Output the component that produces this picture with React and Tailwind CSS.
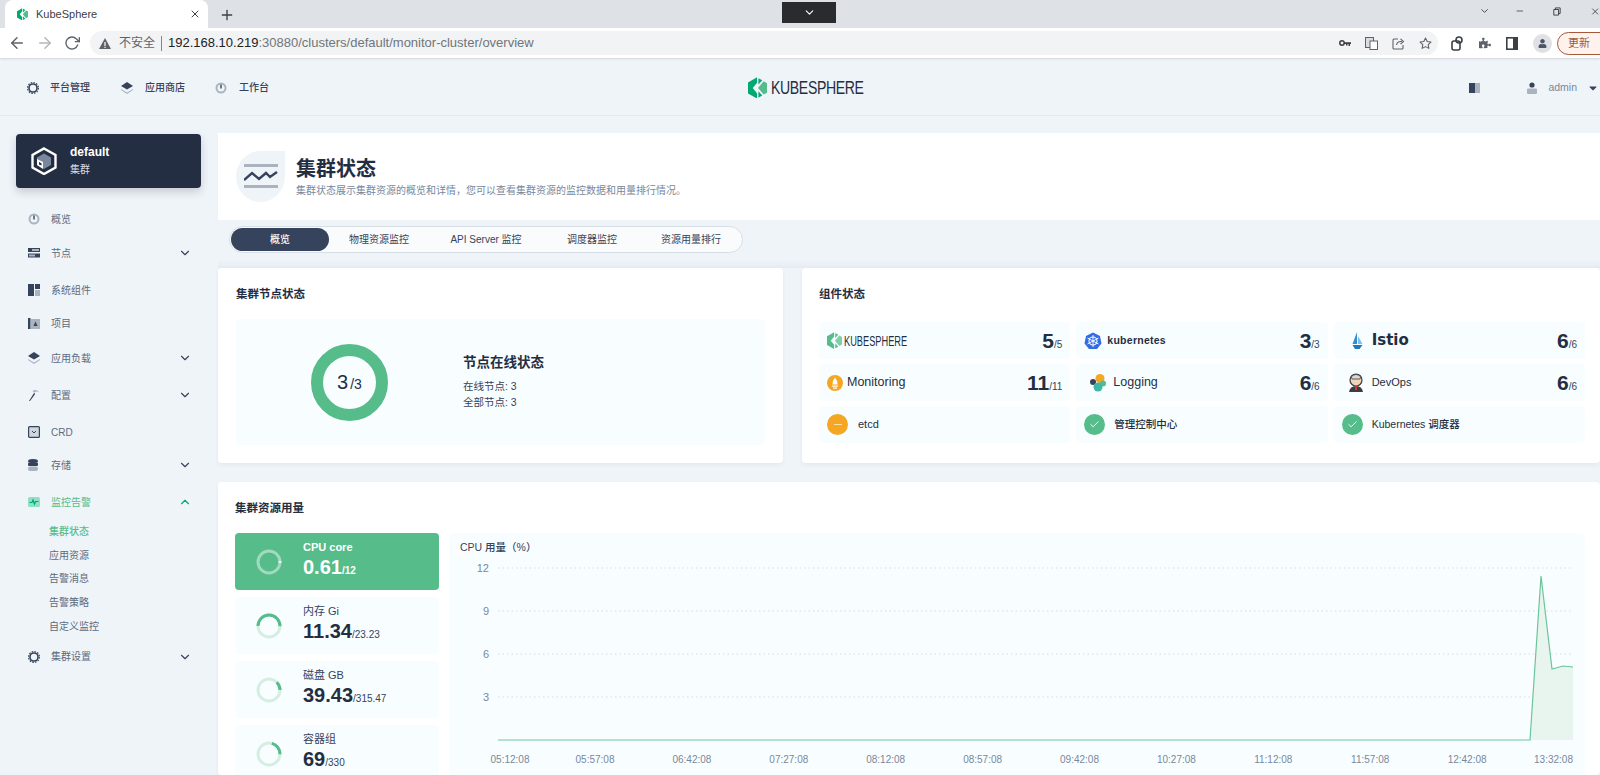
import React from 'react';
import { FiChevronDown, FiChevronUp, FiArrowLeft, FiArrowRight, FiRotateCw, FiX, FiPlus, FiStar, FiCheck, FiMinus } from 'react-icons/fi';
import { FaPuzzlePiece, FaUser, FaCaretDown } from 'react-icons/fa';

const GREEN = '#55bc8a';

const KsLogo = ({ size = 20, dim }) => (
  <svg width={size} height={size * 1.15} viewBox="0 0 20 23" className="shrink-0">
    <path d="M0 5.75 L9.5 0.3 L9.5 6 L5 11.5 L9.5 17 L9.5 22.7 L0 17.25 Z" fill={dim ? '#55bc8a' : '#00a971'} />
    <path d="M11 1.2 L15 3.5 L11 8 Z" fill={dim ? '#55bc8a' : '#00a971'} />
    <path d="M11 15 L15 19.5 L11 21.8 Z" fill={dim ? '#55bc8a' : '#00a971'} />
    <path d="M16.5 4.5 L20 6.5 L20 16.5 L16.5 18.5 L10.5 11.5 Z" fill={dim ? '#7fd0a8' : '#55bc8a'} />
  </svg>
);

const NavIcon = ({ type, active }) => {
  const dark = active ? '#00a971' : '#36435c';
  const light = active ? '#90e0c5' : '#abb4be';
  if (type === 'gauge') return (
    <svg width="12" height="12" viewBox="0 0 12 12">
      <circle cx="6" cy="6" r="5.5" fill={light} />
      <circle cx="6" cy="6" r="3.5" fill="#eff4f9" />
      <rect x="5.3" y="2.5" width="1.4" height="4" fill={dark} />
    </svg>
  );
  if (type === 'nodes') return (
    <svg width="12" height="10" viewBox="0 0 12 10">
      <rect width="12" height="4" fill={dark} />
      <rect y="5.5" width="12" height="4" fill={dark} />
      <rect x="4" y="1" width="7" height="2" fill={light} />
      <rect x="1" y="6.5" width="6" height="2" fill={light} />
    </svg>
  );
  if (type === 'comp') return (
    <svg width="12" height="12" viewBox="0 0 12 12">
      <rect width="6" height="12" fill={dark} />
      <rect x="7" width="5" height="5" fill={dark} />
      <rect x="7" y="6" width="5" height="6" fill={light} />
    </svg>
  );
  if (type === 'project') return (
    <svg width="12" height="11" viewBox="0 0 12 11">
      <rect width="2.5" height="11" fill={dark} />
      <rect x="3" y="1" width="9" height="10" fill={light} />
      <path d="M7.5 3.5 L9.5 8 L5.5 8 Z" fill={dark} />
    </svg>
  );
  if (type === 'layers') return (
    <svg width="12" height="12" viewBox="0 0 12 12">
      <path d="M6 0 L12 4 L6 7.5 L0 4 Z" fill={dark} />
      <path d="M0 7 L6 10.5 L12 7 L12 8 L6 12 L0 8 Z" fill={light} />
    </svg>
  );
  if (type === 'hammer') return (
    <svg width="12" height="12" viewBox="0 0 12 12">
      <path d="M1 12 L6 4 L7.2 5 L2 12 Z" fill={dark} />
      <path d="M4.5 2 Q8 -0.5 11.5 3.5 Q8 1.5 6.5 4 Z" fill={light} />
    </svg>
  );
  if (type === 'crd') return (
    <svg width="12" height="12" viewBox="0 0 12 12">
      <rect x="0.6" y="0.6" width="10.8" height="10.8" rx="1" fill="#cfd6de" stroke={dark} strokeWidth="1.2" />
      <path d="M4 5 L6 7 L8 5" fill="none" stroke={dark} />
    </svg>
  );
  if (type === 'db') return (
    <svg width="10" height="12" viewBox="0 0 10 12">
      <ellipse cx="5" cy="2" rx="5" ry="2" fill={dark} />
      <rect y="3.5" width="10" height="3.5" rx="1" fill={dark} />
      <rect y="7.5" width="10" height="4.5" rx="2" fill={light} />
    </svg>
  );
  if (type === 'monitor') return (
    <svg width="12" height="10" viewBox="0 0 12 10">
      <rect width="12" height="10" rx="1.5" fill="#90e0c5" />
      <path d="M1.5 5.5 L4 5.5 L5 3 L6.5 7 L7.5 4.5 L10.5 4.5" fill="none" stroke="#00a971" strokeWidth="1.2" />
    </svg>
  );
  if (type === 'gear') return (
    <svg width="12" height="12" viewBox="0 0 12 12">
      <circle cx="6" cy="6" r="4" fill="none" stroke={dark} strokeWidth="1.6" />
      <circle cx="6" cy="6" r="5.4" fill="none" stroke={dark} strokeWidth="1.2" strokeDasharray="1.6 1.2" />
    </svg>
  );
  return null;
};

const sideItems = [
  { label: '概览', icon: 'gauge', cls: 'mt-[21px]' },
  { label: '节点', icon: 'nodes', more: true, cls: 'mt-[14px]' },
  { label: '系统组件', icon: 'comp', cls: 'mt-[17px]' },
  { label: '项目', icon: 'project', cls: 'mt-[13px]' },
  { label: '应用负载', icon: 'layers', more: true, cls: 'mt-[15px]' },
  { label: '配置', icon: 'hammer', more: true, cls: 'mt-[17px]' },
  { label: 'CRD', icon: 'crd', cls: 'mt-[17px]' },
  { label: '存储', icon: 'db', more: true, cls: 'mt-[13px]' },
  { label: '监控告警', icon: 'monitor', open: true, cls: 'mt-[17px]' },
];

const subItems = ['集群状态', '应用资源', '告警消息', '告警策略', '自定义监控'];

const SideRow = ({ item }) => (
  <div className={`flex h-5 items-center pl-[28px] pr-[26px] text-[10px] ${item.cls} ${item.open ? 'text-[#55bc8a]' : 'text-[#5c6b80]'}`}>
    <span className="flex w-[23px] items-center"><NavIcon type={item.icon} active={item.open} /></span>
    <span className="flex-1">{item.label}</span>
    {item.more && <FiChevronDown size={14} className="text-[#36435c]" />}
    {item.open && <FiChevronUp size={14} className="text-[#00a971]" />}
  </div>
);

const Sidebar = () => (
  <aside className="w-[218px] shrink-0 pt-[18px]">
    <div className="ml-4 mr-[17px] flex h-[54px] items-center rounded-sm bg-[#242e42] pl-[15px] shadow-[0_4px_8px_0_rgba(36,46,66,0.2)]">
      <svg width="26" height="28" viewBox="0 0 26 28">
        <path d="M13 1.5 L24.5 8 L24.5 20.5 L13 27 L1.5 20.5 L1.5 8 Z" fill="none" stroke="#fff" strokeWidth="2.4" />
        <path d="M13 6.5 L20 10.5 L20 18 L13 22 L6 18 L6 10.5 Z" fill="#79879c" />
        <path d="M6 12 L12 15 L12 22 L6 18 Z" fill="#fff" />
        <path d="M8 15 L10.5 16.2 L10.5 18.6 L8 17.4 Z" fill="#242e42" />
      </svg>
      <div className="ml-[13px] -mt-[2px] text-white">
        <div className="text-xs font-bold leading-[18px]">default</div>
        <div className="text-[10px] leading-[17px] text-[#d8dee5]">集群</div>
      </div>
    </div>
    {sideItems.map((item) => <SideRow key={item.label} item={item} />)}
    <div className="mt-[8px] pl-[49px]">
      {subItems.map((s, i) => (
        <div key={s} className={`flex h-[23.6px] items-center text-[10px] ${i === 0 ? 'font-medium text-[#55bc8a]' : 'text-[#5c6b80]'}`}>{s}</div>
      ))}
    </div>
    <SideRow item={{ label: '集群设置', icon: 'gear', more: true, cls: 'mt-[9px]' }} />
  </aside>
);

const BrowserChrome = () => (
  <div className="shrink-0">
    <div className="relative flex h-[28px] items-end bg-[#dee1e6]">
      <div className="ml-[5px] flex h-[28px] w-[203px] items-center rounded-t-lg bg-white pl-[12px] pr-[7px] text-xs text-[#3c4043]">
        <KsLogo size={11} />
        <span className="ml-[8px] flex-1 text-[11px]">KubeSphere</span>
        <FiX size={12} className="text-[#3c4043]" />
      </div>
      <FiPlus size={16} className="mb-[5px] ml-[11px] text-[#3c4043]" />
      <div className="absolute left-[782px] top-[2px] flex h-[21px] w-[54px] items-center justify-center bg-[#2a2b2e] text-white">
        <FiChevronDown size={13} />
      </div>
      <div className="absolute right-0 top-[4px] flex w-[122px] items-center text-[#3c4043]">
        <FiChevronDown size={14} className="ml-[1px]" />
        <FiMinus size={12} className="ml-[25px]" />
        <svg width="10" height="11" viewBox="0 0 10 11" className="ml-[28px]"><path d="M1 3 H7 V10 H1 Z M3 3 V1 H9 V8 H7" fill="none" stroke="#3c4043" strokeWidth="1.2" /></svg>
        <FiX size={13} className="ml-[29px]" />
      </div>
    </div>
    <div className="flex h-[30px] items-center overflow-hidden bg-white pl-[8px] shadow-[0_1px_2px_rgba(0,0,0,0.12)]">
      <FiArrowLeft size={18} className="shrink-0 text-[#5f6368]" />
      <FiArrowRight size={18} className="ml-[10px] shrink-0 text-[#b4b7bb]" />
      <FiRotateCw size={16} className="ml-[10px] shrink-0 text-[#5f6368]" />
      <div className="ml-[10px] flex h-[24px] w-[1348px] shrink-0 items-center rounded-full bg-[#f1f3f4] pl-[9px] pr-[6px] text-[13px] text-[#70757a]">
        <svg width="12" height="11" viewBox="0 0 12 11"><path d="M6 0 L12 11 L0 11 Z" fill="#5f6368" /><rect x="5.4" y="4" width="1.2" height="4" fill="#fff" /><rect x="5.4" y="8.8" width="1.2" height="1.2" fill="#fff" /></svg>
        <span className="ml-[8px] text-xs text-[#5f6368]">不安全</span>
        <span className="mx-[6px] h-[15px] w-px bg-[#80868b]" />
        <span className="text-[#202124]">192.168.10.219</span>
        <span>:30880/clusters/default/monitor-cluster/overview</span>
        <div className="ml-auto flex items-center gap-[14px] text-[#5f6368]">
          <svg width="12" height="8" viewBox="0 0 12 8"><circle cx="3" cy="4" r="2.2" fill="none" stroke="#3c4043" strokeWidth="1.5" /><path d="M5 3.2 H12 V5 H11 V7 H9.5 V5 H8.5 V6.5 H7 V5 H5 Z" fill="#3c4043" /></svg>
          <svg width="13" height="13" viewBox="0 0 13 13"><rect x="0.5" y="0.5" width="8" height="10" fill="#dadce0" stroke="#5f6368" /><rect x="5" y="4" width="7.5" height="8.5" fill="#fff" stroke="#5f6368" /></svg>
          <svg width="13" height="13" viewBox="0 0 13 13" fill="none" stroke="#5f6368" strokeWidth="1.1"><path d="M6 2 H2 Q1 2 1 3 V11 Q1 12 2 12 H10 Q11 12 11 11 V8" /><path d="M4.5 8 Q5 4.5 9 4.5 H10 M8.5 1.8 L11.5 4.5 L8.5 7.2" /></svg>
          <FiStar size={13} />
        </div>
      </div>
      <div className="ml-[13px] flex shrink-0 items-center gap-[15px] text-[#5f6368]">
        <svg width="13" height="15" viewBox="0 0 13 15"><rect x="1" y="5" width="8" height="9" rx="2" fill="none" stroke="#3c4043" strokeWidth="1.6" /><circle cx="8" cy="4" r="3" fill="none" stroke="#3c4043" strokeWidth="1.6" /></svg>
        <FaPuzzlePiece size={12} />
        <svg width="12" height="13" viewBox="0 0 12 13"><rect x="0.8" y="0.8" width="10.4" height="11.4" fill="none" stroke="#3c4043" strokeWidth="1.6" /><rect x="7" y="1" width="4" height="11" fill="#3c4043" /></svg>
        <span className="flex h-[19px] w-[19px] items-center justify-center rounded-full bg-[#dfe1e5] text-[#4a5568]"><FaUser size={9} /></span>
      </div>
      <div className="ml-[5px] flex h-[23px] w-[60px] shrink-0 items-center rounded-full border border-[#a5583a] bg-[#fdf3ec] pl-[10px] text-[11px] text-[#a5583a]">更新<span className="ml-[6px]">⋮</span></div>
    </div>
  </div>
);

const TopNav = () => (
  <div className="flex h-[58px] shrink-0 items-center border-b border-[#e3e9ef] pl-[27px] pr-px pt-[2px] text-[10px] font-medium text-[#36435c]">
    <span className="flex items-center"><NavIcon type="gear" /><span className="ml-[11px]">平台管理</span></span>
    <span className="ml-[31px] flex items-center"><NavIcon type="layers" /><span className="ml-[12px]">应用商店</span></span>
    <span className="ml-[30px] flex items-center"><NavIcon type="gauge" /><span className="ml-[12px]">工作台</span></span>
    <div className="ml-[479px] flex items-center">
      <KsLogo size={19} />
      <span className="ml-[4px] origin-left scale-x-[0.74] text-[19px] font-normal leading-none tracking-tight text-[#242e42]">KUBESPHERE</span>
    </div>
    <div className="ml-auto flex items-center text-[10.5px] font-normal text-[#79879c]">
      <svg width="11" height="10" viewBox="0 0 11 10"><rect width="6" height="10" fill="#36435c" /><rect x="6" width="5" height="10" fill="#abb4be" /></svg>
      <svg width="10" height="12" viewBox="0 0 10 12" className="ml-[47px]"><circle cx="5" cy="3" r="2.6" fill="#36435c" /><rect y="6.5" width="10" height="5.5" rx="1" fill="#abb4be" /></svg>
      <span className="ml-[11px]">admin</span>
      <FaCaretDown size={12} className="ml-[10px] text-[#36435c]" />
    </div>
  </div>
);

const PageHead = () => (
  <div className="flex h-[87px] items-center bg-white pl-[18px]">
    <div className="flex h-[51px] w-[49px] items-center justify-center rounded-[50%] rounded-tr-none bg-[#eff4f9]">
      <svg width="34" height="26" viewBox="0 0 34 26">
        <rect width="34" height="3" fill="#abb4be" />
        <path d="M0 16 L8 9 L15 15 L22 9 L26 13 L33 8" fill="none" stroke="#36435c" strokeWidth="2.4" />
        <rect y="21" width="34" height="3" fill="#abb4be" />
      </svg>
    </div>
    <div className="ml-[11px]">
      <h1 className="text-[20px] font-bold leading-[28px] text-[#242e42]">集群状态</h1>
      <p className="text-[10px] leading-[16px] text-[#79879c]">集群状态展示集群资源的概览和详情，您可以查看集群资源的监控数据和用量排行情况。</p>
    </div>
  </div>
);

const tabs = [
  { label: '物理资源监控', cls: 'w-[100px]' },
  { label: 'API Server 监控', cls: 'w-[114px]' },
  { label: '调度器监控', cls: 'w-[98px]' },
  { label: '资源用量排行', cls: 'w-[100px]' },
];

const Tabs = () => (
  <div className="h-[48px] bg-[#eff4f9] pl-[11px] pt-[6px] shadow-[inset_0_-8px_8px_-8px_rgba(200,210,220,0.5)]">
    <div className="flex h-[27px] w-[514px] items-center rounded-full border border-[#d8dee5] bg-[#f9fbfd] pl-px text-[10px] text-[#36435c]">
      <div className="flex h-[23px] w-[98px] items-center justify-center rounded-full bg-[#36435c] font-medium text-white">概览</div>
      {tabs.map((t) => <div key={t.label} className={`text-center ${t.cls}`}>{t.label}</div>)}
    </div>
  </div>
);

const CardTitle = ({ children }) => (
  <h3 className="text-[11.5px] font-bold leading-[18px] text-[#242e42]">{children}</h3>
);

const NodeStatus = () => (
  <div className="w-[565px] shrink-0 rounded-sm bg-white px-[18px] pt-[17px] shadow-[0_2px_4px_rgba(36,46,66,0.06)]">
    <CardTitle>集群节点状态</CardTitle>
    <div className="mt-[16px] flex h-[126px] items-center rounded-sm bg-[#f8feff] pl-[75px]">
      <div className="flex h-[77px] w-[77px] items-center justify-center rounded-full border-[12px] border-[#55bc8a] text-[#242e42]">
        <span className="text-[20px] leading-none">3</span><span className="ml-[2px] mt-[3px] text-sm leading-none">/3</span>
      </div>
      <div className="ml-[75px] pb-[2px] text-[#36435c]">
        <div className="text-[13.5px] font-bold leading-[20px] text-[#242e42]">节点在线状态</div>
        <div className="mt-[5px] text-[10.5px] leading-[16px]">在线节点: 3</div>
        <div className="text-[10.5px] leading-[16px]">全部节点: 3</div>
      </div>
    </div>
  </div>
);

// little product marks for the component tiles
const K8s = () => (
  <svg width="18" height="18" viewBox="0 0 18 18">
    <path d="M9 0.5 L16 4 L17.5 11.5 L13 17 L5 17 L0.5 11.5 L2 4 Z" fill="#326ce5" />
    <circle cx="9" cy="9" r="4" fill="none" stroke="#fff" strokeWidth="1.1" />
    <path d="M9 3 V15 M3.5 6 L14.5 12 M14.5 6 L3.5 12" stroke="#fff" strokeWidth="0.9" />
  </svg>
);
const IstioMark = () => (
  <svg width="11" height="18" viewBox="0 0 11 18">
    <path d="M5 0 L5 12 L0.5 12 Z" fill="#2d8fd5" />
    <path d="M6 4 L10.5 12 L6 12 Z" fill="#7cbfe8" />
    <path d="M0.5 13 L10.5 13 L7.5 17 L3 17 Z" fill="#2277b5" />
  </svg>
);
const PromMark = () => (
  <svg width="16" height="16" viewBox="0 0 16 16">
    <circle cx="8" cy="8" r="8" fill="#f5a623" />
    <path d="M8 2.5 Q11 6 10.5 9.5 L5.5 9.5 Q5 6 8 2.5 Z" fill="#fff" />
    <rect x="5" y="10.5" width="6" height="1.2" fill="#fff" />
    <rect x="6" y="12.5" width="4" height="1.2" fill="#fff" />
  </svg>
);
const LogMark = () => (
  <svg width="18" height="18" viewBox="0 0 18 18">
    <circle cx="11" cy="4.5" r="4.5" fill="#f5a623" />
    <circle cx="4" cy="8" r="3" fill="#36435c" />
    <circle cx="14" cy="9.5" r="3" fill="#55bc8a" />
    <circle cx="9" cy="13" r="4.5" fill="#3fb6a8" />
  </svg>
);
const JenkinsMark = () => (
  <svg width="16" height="19" viewBox="0 0 16 19">
    <circle cx="8" cy="7" r="6" fill="#f0d6b7" stroke="#3d3d3d" strokeWidth="1.2" />
    <path d="M3 4 Q8 -1 13 4 L12 6 L4 6 Z" fill="#d9d9d9" stroke="#3d3d3d" strokeWidth="0.8" />
    <path d="M1 19 Q2 13 8 13 Q14 13 15 19 Z" fill="#3d3d3d" />
    <path d="M7 13 L9 13 L9 17 L7 17 Z" fill="#d33833" />
  </svg>
);

const Count = ({ now, total }) => (
  <span className="ml-auto whitespace-nowrap text-[#242e42]">
    <span className="text-[21px] font-bold">{now}</span>
    <span className="text-[10px] text-[#36435c]">/{total}</span>
  </span>
);

const Tile = ({ children, count }) => (
  <div className="flex h-[37px] items-center rounded-sm bg-[#f8feff] pl-[8px] pr-[8px]">
    {children}
    {count && <Count now={count[0]} total={count[1]} />}
  </div>
);

const StatusDot = ({ ok }) => (
  <span className={`flex h-[21px] w-[21px] shrink-0 items-center justify-center rounded-full ${ok ? 'bg-[#55bc8a]' : 'bg-[#f5a623]'}`}>
    {ok ? <FiCheck size={11} className="text-white" /> : <span className="h-px w-[8px] bg-[#ffe0a8]" />}
  </span>
);

const ComponentStatus = () => (
  <div className="min-w-0 flex-1 rounded-sm bg-white pl-[17px] pr-[15px] pt-[17px] shadow-[0_2px_4px_rgba(36,46,66,0.06)]">
    <CardTitle>组件状态</CardTitle>
    <div className="mt-[19px] grid grid-cols-3 gap-x-[6px] gap-y-[5px] text-[#242e42]">
      <Tile count={['5', '5']}>
        <KsLogo size={15} dim />
        <span className="ml-[2px] origin-left scale-x-[0.66] text-[14px] font-medium leading-none">KUBESPHERE</span>
      </Tile>
      <Tile count={['3', '3']}>
        <K8s />
        <span className="ml-[5px] text-[10.5px] font-bold tracking-wide">kubernetes</span>
      </Tile>
      <Tile count={['6', '6']}>
        <span className="ml-[10px]"><IstioMark /></span>
        <span className="ml-[9px] font-['DejaVu_Sans'] text-[15px] font-bold">Istio</span>
      </Tile>
      <Tile count={['11', '11']}>
        <PromMark />
        <span className="ml-[4px] text-[12.5px] font-medium">Monitoring</span>
      </Tile>
      <Tile count={['6', '6']}>
        <span className="ml-[5px]"><LogMark /></span>
        <span className="ml-[6px] text-[12.5px] font-medium">Logging</span>
      </Tile>
      <Tile count={['6', '6']}>
        <span className="ml-[6px]"><JenkinsMark /></span>
        <span className="ml-[8px] text-[11px] font-medium">DevOps</span>
      </Tile>
      <Tile>
        <StatusDot />
        <span className="ml-[10px] text-[11px] font-medium">etcd</span>
      </Tile>
      <Tile>
        <StatusDot ok />
        <span className="ml-[9px] text-[10.5px] font-medium">管理控制中心</span>
      </Tile>
      <Tile>
        <StatusDot ok />
        <span className="ml-[9px] text-[10.5px] font-medium">Kubernetes 调度器</span>
      </Tile>
    </div>
  </div>
);

const Ring = ({ pct, start = 0, active }) => {
  const r = 11;
  const c = 2 * Math.PI * r;
  return (
    <svg width="26" height="26" viewBox="0 0 26 26" className="shrink-0">
      <circle cx="13" cy="13" r={r} fill="none" stroke={active ? 'rgba(255,255,255,0.45)' : '#d5eee2'} strokeWidth="3" />
      <circle
        cx="13" cy="13" r={r} fill="none"
        stroke={active ? '#fff' : GREEN} strokeWidth="3"
        strokeDasharray={`${(pct / 100) * c} ${c}`}
        transform={`rotate(${start} 13 13)`}
      />
    </svg>
  );
};

const stats = [
  { label: 'CPU core', now: '0.61', total: '12', pct: 2, start: -4, active: true },
  { label: '内存 Gi', now: '11.34', total: '23.23', pct: 50, start: -180 },
  { label: '磁盘 GB', now: '39.43', total: '315.47', pct: 12.5, start: -45 },
  { label: '容器组', now: '69', total: '330', pct: 21, start: -75 },
];

const StatTile = ({ s }) => (
  <div className={`relative flex h-[57px] shrink-0 items-center overflow-hidden rounded-sm pl-[21px] ${s.active ? 'bg-[#55bc8a] text-white' : 'bg-[#f8feff] text-[#242e42]'}`}>
    <Ring pct={s.pct} start={s.start} active={s.active} />
    <div className="ml-[21px]">
      <div className={`text-[11px] leading-[15px] ${s.active ? 'font-bold' : 'text-[#36435c]'}`}>{s.label}</div>
      <div className="leading-[25px]">
        <span className="text-[20px] font-bold">{s.now}</span>
        <span className={`text-[10px] ${s.active ? 'font-bold' : 'text-[#36435c]'}`}>/{s.total}</span>
      </div>
    </div>
  </div>
);

const yTicks = [[12, 35], [9, 78], [6, 121], [3, 164]];
const xTicks = ['05:57:08', '06:42:08', '07:27:08', '08:12:08', '08:57:08', '09:42:08', '10:27:08', '11:12:08', '11:57:08', '12:42:08'];

const CpuChart = () => (
  <svg width="1135" height="242" viewBox="0 0 1135 242" className="ml-px block" fontFamily="'Liberation Sans', 'Noto Sans CJK SC', sans-serif">
    {yTicks.map(([v, y]) => (
      <g key={v}>
        <text x="39" y={y + 4} textAnchor="end" fontSize="11" fill="#79879c">{v}</text>
        <line x1="48" x2="1123" y1={y} y2={y} stroke="#d5dde3" strokeDasharray="1.5 3" />
      </g>
    ))}
    <path d="M1080 207 L1091 43 L1102 136 L1113 133 L1123 134 L1123 207 Z" fill="#e8f5ef" />
    <path d="M48 207 L1080 207 L1091 43 L1102 136 L1113 133 L1123 134" fill="none" stroke="#6cc49a" strokeWidth="1.2" />
    <text x="60" y="230" textAnchor="middle" fontSize="10" fill="#79879c">05:12:08</text>
    {xTicks.map((t, i) => (
      <text key={t} x={145 + i * 96.9} y="230" textAnchor="middle" fontSize="10" fill="#79879c">{t}</text>
    ))}
    <text x="1123" y="230" textAnchor="end" fontSize="10" fill="#79879c">13:32:08</text>
  </svg>
);

const ResourceUsage = () => (
  <div className="mt-[19px] flex-1 rounded-sm bg-white pl-[17px] pt-[17px] shadow-[0_2px_4px_rgba(36,46,66,0.06)]">
    <CardTitle>集群资源用量</CardTitle>
    <div className="mt-[16px] flex gap-[10px] pr-[15px]">
      <div className="flex h-[242px] w-[204px] shrink-0 flex-col gap-[7px]">
        {stats.map((s) => <StatTile key={s.label} s={s} />)}
      </div>
      <div className="relative flex-1 rounded-sm bg-[#f8feff]">
        <div className="absolute left-[11px] top-[7px] text-[10.5px] font-medium text-[#36435c]">CPU 用量（%）</div>
        <CpuChart />
      </div>
    </div>
  </div>
);

export default function App() {
  return (
    <div className="flex h-[775px] w-[1600px] flex-col overflow-hidden bg-[#eff4f9] font-['Liberation_Sans','Noto_Sans_CJK_SC',sans-serif]">
      <BrowserChrome />
      <TopNav />
      <div className="flex min-h-0 flex-1">
        <Sidebar />
        <main className="flex min-w-0 flex-1 flex-col pt-[17px]">
          <PageHead />
          <Tabs />
          <div className="flex h-[195px] shrink-0 gap-[19px]">
            <NodeStatus />
            <ComponentStatus />
          </div>
          <ResourceUsage />
        </main>
      </div>
    </div>
  );
}
